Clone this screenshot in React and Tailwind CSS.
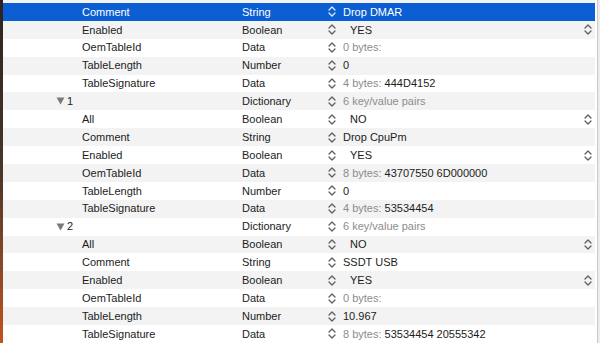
import React from 'react';

const rows = [
  { key: 'Comment', type: 'String', value: 'Drop DMAR', selected: true },
  { key: 'Enabled', type: 'Boolean', bool: 'YES' },
  { key: 'OemTableId', type: 'Data', hint: '0 bytes:' },
  { key: 'TableLength', type: 'Number', value: '0' },
  { key: 'TableSignature', type: 'Data', hint: '4 bytes:', value: '444D4152' },
  { key: '1', type: 'Dictionary', hint: '6 key/value pairs', parent: true },
  { key: 'All', type: 'Boolean', bool: 'NO' },
  { key: 'Comment', type: 'String', value: 'Drop CpuPm' },
  { key: 'Enabled', type: 'Boolean', bool: 'YES' },
  { key: 'OemTableId', type: 'Data', hint: '8 bytes:', value: '43707550 6D000000' },
  { key: 'TableLength', type: 'Number', value: '0' },
  { key: 'TableSignature', type: 'Data', hint: '4 bytes:', value: '53534454' },
  { key: '2', type: 'Dictionary', hint: '6 key/value pairs', parent: true },
  { key: 'All', type: 'Boolean', bool: 'NO' },
  { key: 'Comment', type: 'String', value: 'SSDT USB' },
  { key: 'Enabled', type: 'Boolean', bool: 'YES' },
  { key: 'OemTableId', type: 'Data', hint: '0 bytes:' },
  { key: 'TableLength', type: 'Number', value: '10.967' },
  { key: 'TableSignature', type: 'Data', hint: '8 bytes:', value: '53534454 20555342' },
];

function Stepper({ light }) {
  return (
    <svg width="8" height="11" viewBox="0 0 8 11" className="shrink-0">
      <path
        d="M1 4 L4 1 L7 4 M1 7 L4 10 L7 7"
        fill="none"
        stroke={light ? '#dfe9f8' : '#5e5e5e'}
        strokeWidth="1.3"
        strokeLinecap="round"
        strokeLinejoin="round"
      />
    </svg>
  );
}

function Row({ row, index }) {
  const bg = row.selected ? 'bg-[#0b5fd3] text-white' : index % 2 === 1 ? 'bg-[#f3f3f3] text-[#1c1c1c]' : 'bg-white text-[#1c1c1c]';
  return (
    <div className={`flex h-[18px] items-center ${bg}`}>
      <div className={`flex w-[239px] shrink-0 items-center ${row.parent ? 'pl-[53px]' : 'pl-[79px]'}`}>
        {row.parent && (
          <svg width="9" height="8" viewBox="0 0 9 8" className="mr-[2px] shrink-0">
            <path d="M0.5 0.5 L8.5 0.5 L4.5 7.5 Z" fill="#7a7a7a" />
          </svg>
        )}
        <span>{row.key}</span>
      </div>
      <div className="w-[86px] shrink-0">{row.type}</div>
      <div className="flex flex-1 items-center">
        <Stepper light={row.selected} />
        <div className="ml-[7px] flex flex-1 items-center">
          {row.bool ? (
            <>
              <span className="ml-[7px] flex-1">{row.bool}</span>
              <span className="mr-[3px]"><Stepper /></span>
            </>
          ) : (
            <span>
              {row.hint && <span className="text-[#8c8c8c]">{row.hint}</span>}
              {row.hint && row.value && ' '}
              {row.value}
            </span>
          )}
        </div>
      </div>
    </div>
  );
}

export default function App() {
  return (
    <div className="flex h-[343px] w-[600px] overflow-hidden bg-white font-['Liberation_Sans',Arial,sans-serif] text-[11px]">
      <div className="w-[3px] shrink-0 bg-gradient-to-b from-[#2c2420] via-[#4a3628] to-[#c4521c]" />
      <div className="flex w-[592px] shrink-0 flex-col">
        <div className="h-[3px] shrink-0 bg-[#f3f3f3]" />
        {rows.map((r, i) => (
          <Row key={i} row={r} index={i} />
        ))}
      </div>
      <div className="w-[2px] shrink-0 bg-white" />
      <div className="w-[1px] shrink-0 bg-[#c9c9c9]" />
      <div className="flex-1 bg-[#ececec]" />
    </div>
  );
}
